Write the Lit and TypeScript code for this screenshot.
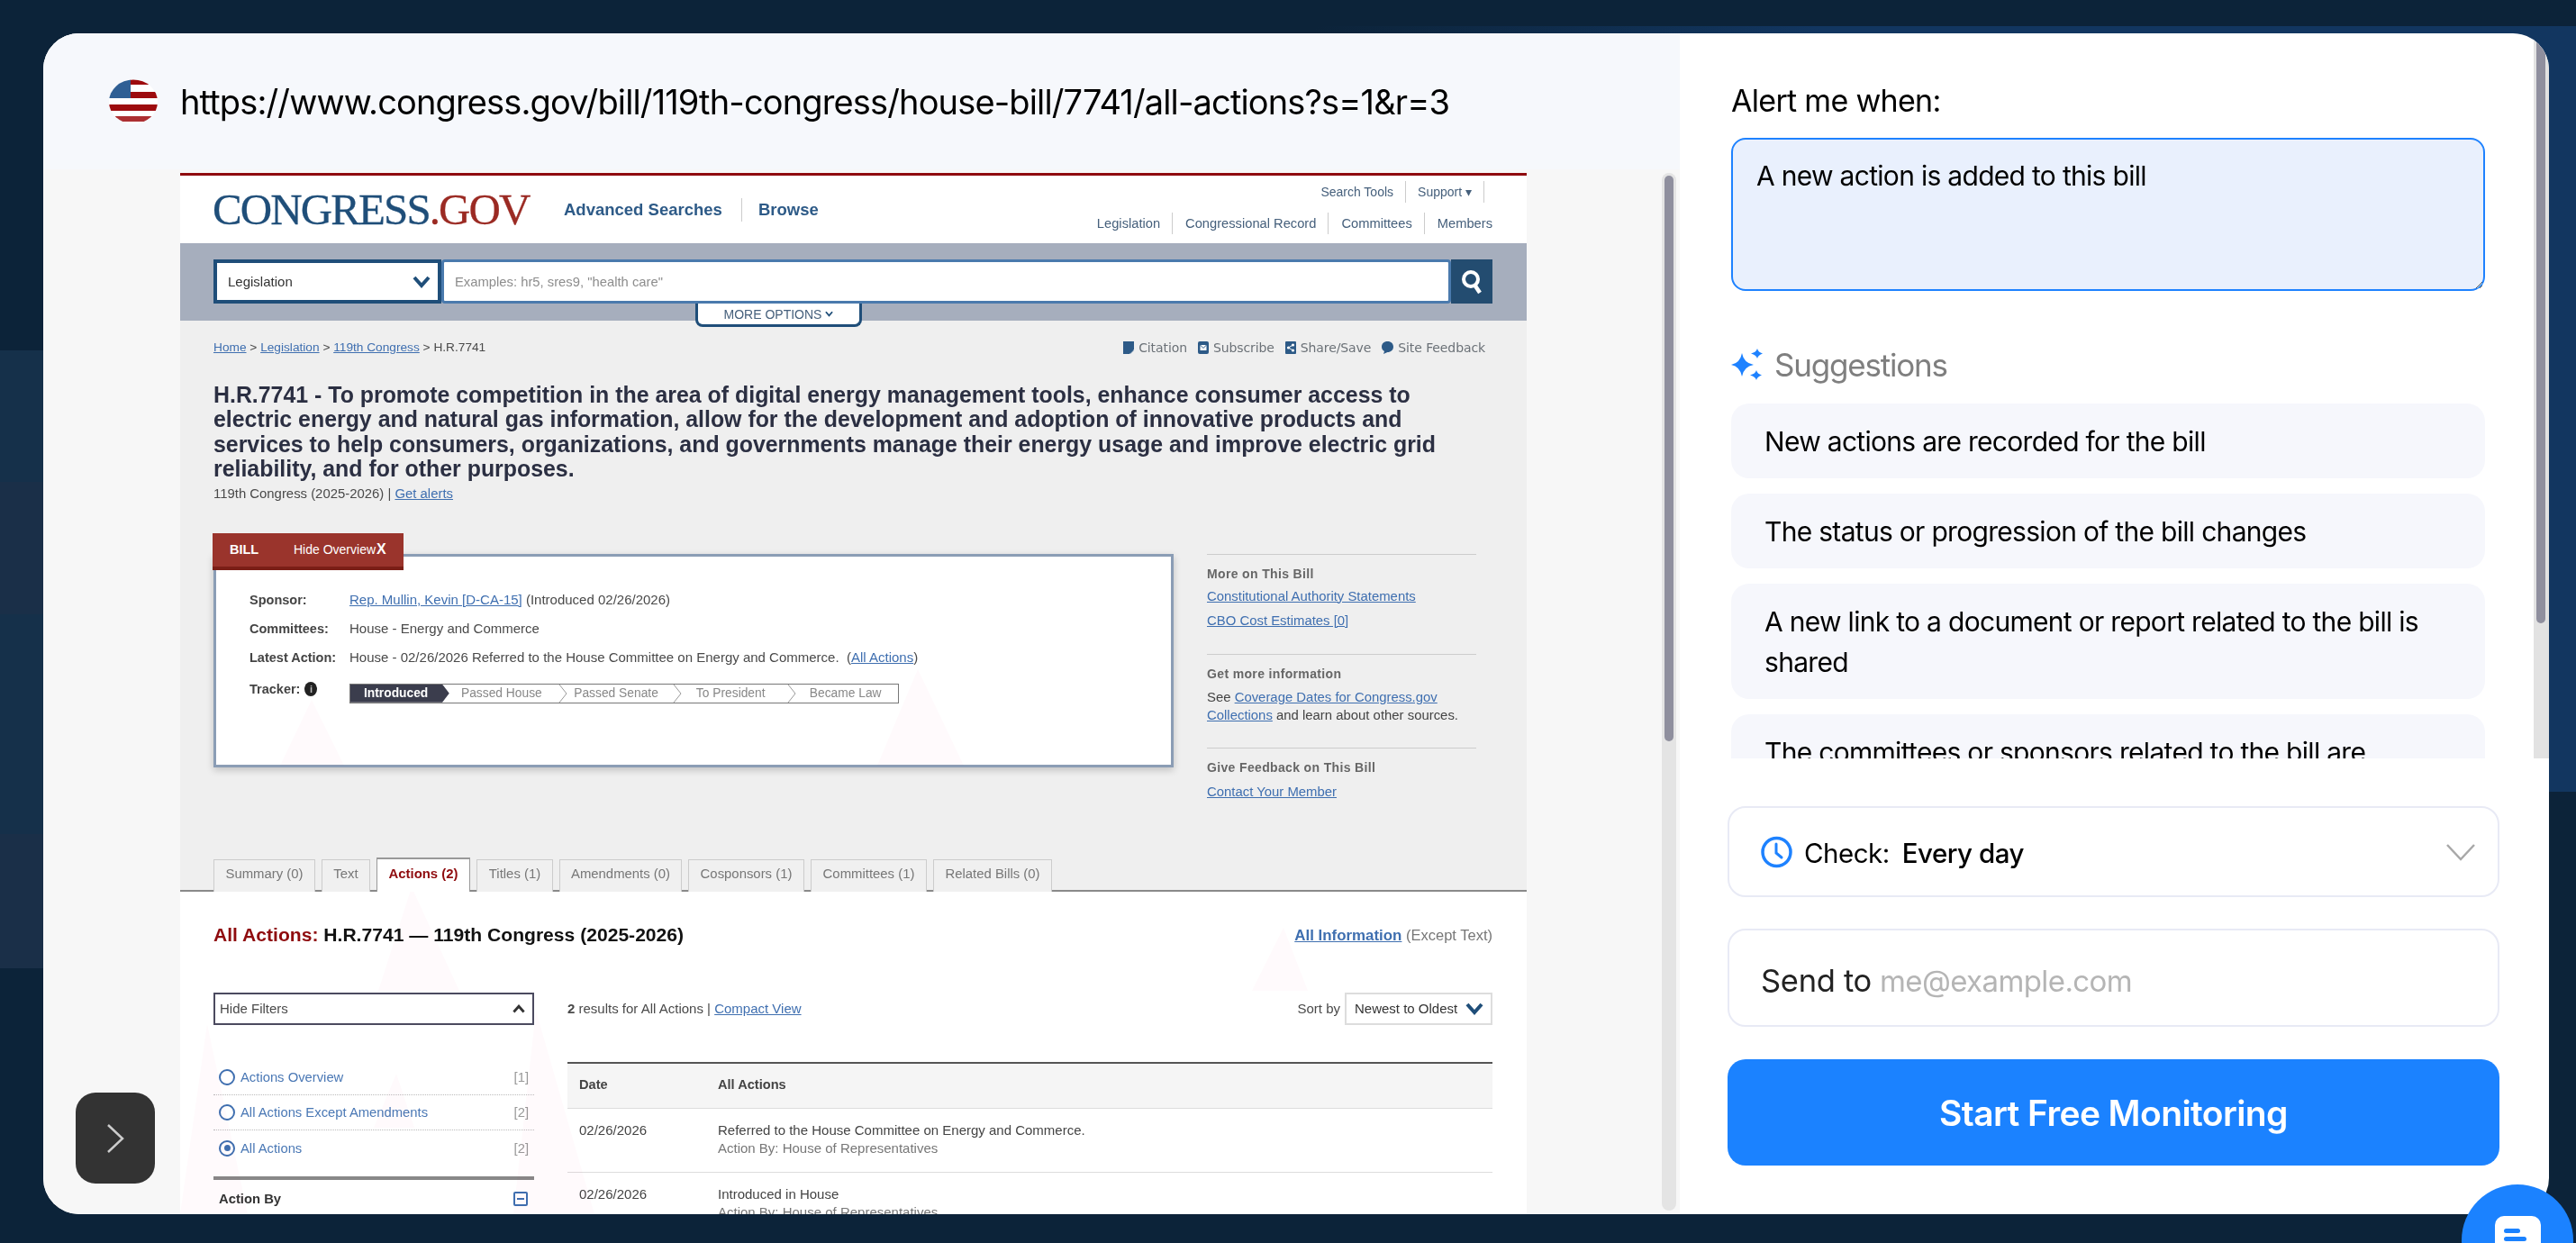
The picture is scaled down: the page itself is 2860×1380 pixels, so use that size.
import { LitElement, html, css, svg } from "lit";
import { customElement } from "lit/decorators.js";

const chevron = (w: number, h: number, c = "#1f4e79", sw = 4) => html`<svg width=${w} height=${h} viewBox="0 0 20 14"><path d="M2 2 L10 11 L18 2" fill="none" stroke=${c} stroke-width=${sw} /></svg>`;

@customElement("congress-shot")
class CongressShot extends LitElement {
  static styles = css`
    :host { display: block; width: 1495px; height: 1156px; position: relative; font: 14.8px/20px "Liberation Sans", Arial, sans-serif; color: #4a4a4a; overflow: hidden; background: #fff; }
    a { color: #3f6fb0; text-decoration: underline; }
    .redline { height: 3px; background: #8f0b0e; }
    .head { height: 75px; display: flex; padding: 0 38px 0 36px; align-items: center; background: #fff; }
    .logo { font: 49px/40px "Liberation Serif", serif; color: #1f4e79; width: 351px; white-space: nowrap; letter-spacing: -1.9px; -webkit-text-stroke: .3px currentColor; }
    .logo b { font-weight: 400; color: #9b2a23; }
    .nav { display: flex; margin-left: 39px; font: bold 18.5px/26px "Liberation Sans", sans-serif; color: #2d5a87; }
    .nav span:first-child { width: 197px; border-right: 1px solid #ccc; margin-right: 18px; white-space: nowrap; }
    .util { margin-left: auto; align-self: flex-start; padding-top: 6px; display: flex; flex-direction: column; align-items: flex-end; gap: 11px; font-size: 14.7px; color: #46607c; }
    .u1, .u2 { display: flex; height: 24px; line-height: 24px; white-space: nowrap; }
    .u1 { margin-right: 9px; font-size: 14px; }
    .u1 span { padding: 0 13px; border-right: 1px solid #ccc; }
    .u2 span { padding: 0 13px 0 14px; border-right: 1px solid #ccc; }
    .u2 span:last-child { border: 0; padding-right: 0; }
    .band { height: 86px; background: #a6aebd; padding: 18px 38px 0 37px; box-sizing: border-box; }
    .sr { display: flex; height: 49px; }
    .sel { width: 253px; box-sizing: border-box; border: 4px solid #1f4e79; background: #fff; display: flex; align-items: center; justify-content: space-between; padding: 0 8px 0 12px; font-size: 15px; color: #333; }
    .inp { flex: 1; box-sizing: border-box; border: 3px solid #4a7aad; border-radius: 4px; background: #fff; color: #8d8d8d; font-size: 14.8px; display: flex; align-items: center; padding-left: 12px; }
    .go { width: 46px; background: #234c70; display: flex; align-items: center; justify-content: center; }
    .more { margin-left: 535px; width: 185px; height: 26px; box-sizing: border-box; background: #fff; border: 3px solid #1f4e79; border-top: 0; border-radius: 0 0 8px 8px; display: flex; align-items: center; justify-content: center; gap: 4px; font-size: 14px; color: #46607c; position: relative; }
    .gray { height: 634px; box-sizing: border-box; background: #efefef; padding: 0 38px 0 37px; border-bottom: 2px solid #8a8a8a; display: flex; flex-direction: column; }
    .crumb { display: flex; justify-content: space-between; margin-top: 20px; height: 20px; font-size: 13.7px; }
    .acts { display: flex; gap: 12px; padding-right: 8px; font: 14px/20px "DejaVu Sans", sans-serif; letter-spacing: -.1px; color: #6b7177; }
    .acts span { display: flex; align-items: center; gap: 5px; }
    h1 { margin: 29px 0 0; font: bold 24.9px/27.4px "Liberation Sans", sans-serif; color: #2b2f42; width: 1400px; }
    .sub { margin-top: 3px; font-size: 14.9px; }
    .over { display: flex; margin-top: 34px; }
    .ol { width: 1066px; }
    .btab { width: 212px; height: 41px; box-sizing: border-box; margin-left: -1px; margin-bottom: -18px; background: #9a342c; border-bottom: 4px solid #7a1e16; color: #fff; display: flex; align-items: center; padding-left: 19px; font-size: 14px; position: relative; z-index: 1; white-space: nowrap; }
    .btab b { width: 71px; font-size: 14.5px; }
    .btab strong { font-size: 16px; margin-left: 1px; }
    .box { height: 237px; box-sizing: border-box; background: #fff; border: 3px solid #8b9db5; box-shadow: 0 3px 8px rgba(0,0,0,.2); padding: 32px 0 0 37px; }
    .r { display: grid; grid-template-columns: 111px 1fr; height: 32px; line-height: 32px; white-space: nowrap; font-size: 15px; }
    .r b { color: #444; font-size: 14.5px; }
    .r4 { margin-top: 3px; }
    .info { display: inline-block; width: 14px; height: 16px; border-radius: 50%; background: #222; margin-left: 5px; color: #bbb; font: bold 11px/16px "Liberation Sans", sans-serif; text-align: center; vertical-align: 1px; }
    .tr { display: flex; width: 610px; height: 22px; margin-top: 10px; box-sizing: border-box; border: 1px solid #777; background: #fff; font-size: 13.8px; line-height: 20px; color: #888; }
    .tr span { display: block; padding-right: 11px; width: 127.5px; box-sizing: border-box; position: relative; white-space: nowrap; text-align: center; }
    .tr span:last-child { width: 117px; padding-right: 0; }
    .tr .on { width: 110px; background: #3b3d4d; color: #fff; font-weight: bold; padding: 0 0 0 15px; text-align: left; clip-path: polygon(0 0, 93% 0, 100% 50%, 93% 100%, 0 100%); }
    .tr svg { position: absolute; right: -4px; top: 0; }
    .side { margin-left: 37px; margin-top: 23px; width: 299px; font-size: 14.9px; color: #444; }
    .sec { border-top: 1px solid #ccc; padding-top: 11px; }
    .sec b { display: block; color: #666; font-size: 14px; letter-spacing: .35px; }
    .s1 { height: 111px; box-sizing: border-box; }
    .s2 { height: 104px; box-sizing: border-box; }
    .m5 { display: block; margin-top: 5px; }
    .m7 { display: block; margin-top: 7px; }
    .m6 { margin-top: 6px; }
    .tabs { margin-top: auto; margin-bottom: -2px; display: grid; grid-template-columns: 113px 54px 104px 85px 136px 129px 129px 132px; gap: 7px; position: relative; z-index: 1; }
    .tabs span { height: 36px; margin-top: 2px; box-sizing: border-box; border: 1px solid #ccc; border-bottom: 0; background: #f0f0f0; text-align: center; line-height: 30px; font-size: 14.9px; color: #777; white-space: nowrap; }
    .tabs .on { height: 38px; margin-top: 0; background: #fff; border: 1px solid #999; border-bottom: 0; border-top-width: 2px; color: #8f0b0e; font-weight: bold; line-height: 32px; }
    .white { height: 358px; overflow: hidden; padding: 33px 38px 0 37px; box-sizing: border-box; }
    .ttl { display: flex; justify-content: space-between; height: 30px; align-items: center; }
    .ttl h2 { margin: 0; font: bold 21.1px/30px "Liberation Sans", sans-serif; color: #111; }
    .ttl h2 em { font-style: normal; color: #8f0b0e; }
    .ttl div { font-size: 16.5px; color: #777; }
    .ttl div a { font-weight: bold; font-size: 16.9px; }
    .cols { display: flex; gap: 37px; margin-top: 49px; }
    .fil { width: 356px; flex: none; }
    .hide { height: 36px; box-sizing: border-box; border: 2px solid #4b4a5f; display: flex; align-items: center; justify-content: space-between; padding: 0 8px 0 5px; font-size: 15px; }
    .list { margin-top: 39px; }
    .li { height: 39px; display: flex; align-items: center; padding: 0 6px; border-bottom: 1px dotted #bbb; box-sizing: border-box; color: #4a78b5; }
    .li:last-child { border: 0; }
    .li i { width: 18px; height: 18px; box-sizing: border-box; border: 2px solid #3f6fb0; border-radius: 50%; margin-right: 6px; display: flex; align-items: center; justify-content: center; }
    .li i.on::after { content: ""; width: 7px; height: 7px; border-radius: 50%; background: #3f6fb0; }
    .li u { text-decoration: none; margin-left: auto; color: #999; }
    .thick { margin-top: 12px; height: 4px; background: #888; }
    .by { height: 42px; display: flex; align-items: center; justify-content: space-between; padding: 0 7px 0 6px; font-weight: bold; color: #333; }
    .min { width: 16px; height: 16px; box-sizing: border-box; border: 2px solid #3f6fb0; border-radius: 2px; display: flex; align-items: center; justify-content: center; }
    .min::after { content: ""; width: 8px; height: 2px; background: #3f6fb0; }
    .main { flex: 1; min-width: 0; font-size: 15px; }
    .mt { display: flex; align-items: center; height: 36px; }
    .sort { margin-left: auto; margin-right: 5px; }
    .ssel { width: 164px; height: 36px; box-sizing: border-box; border: 2px solid #ddd; background: #fff; display: flex; align-items: center; justify-content: space-between; padding: 0 8px 0 9px; color: #333; white-space: nowrap; }
    .tb { margin-top: 41px; border-top: 2px solid #555; }
    .th, .td { display: grid; grid-template-columns: 154px 1fr; padding-left: 13px; }
    .th { height: 50px; padding-bottom: 3px; background: #f5f5f5; border-bottom: 1px solid #ddd; box-sizing: border-box; align-items: center; font-weight: bold; color: #444; font-size: 14.6px; }
    .td { padding-top: 14px; height: 71px; box-sizing: border-box; border-bottom: 1px solid #ddd; color: #444; }
    .td small { display: block; font-size: 15px; color: #777; }
    .tri { position: absolute; left: 0; top: 0; pointer-events: none; mix-blend-mode: multiply; }
  `;
  render() {
    return html`
      <div class="redline"></div>
      <div class="head">
        <div class="logo">CONGRESS<b>.GOV</b></div>
        <div class="nav"><span>Advanced Searches</span><span>Browse</span></div>
        <div class="util">
          <div class="u1"><span>Search Tools</span><span>Support ▾</span></div>
          <div class="u2"><span>Legislation</span><span>Congressional Record</span><span>Committees</span><span>Members</span></div>
        </div>
      </div>
      <div class="band">
        <div class="sr">
          <div class="sel">Legislation ${chevron(20, 14)}</div>
          <div class="inp">Examples: hr5, sres9, "health care"</div>
          <div class="go"><svg width="24" height="28" viewBox="0 0 24 28"><circle cx="11" cy="11" r="8" fill="none" stroke="#fff" stroke-width="4"/><path d="M15 17 L21 26" stroke="#fff" stroke-width="4.5"/></svg></div>
        </div>
        <div class="more">MORE OPTIONS ${chevron(9, 7, "#1f4e79", 4)}</div>
      </div>
      <div class="gray">
        <div class="crumb">
          <div><a>Home</a> &gt; <a>Legislation</a> &gt; <a>119th Congress</a> &gt; H.R.7741</div>
          <div class="acts">
            <span><svg width="12" height="14" viewBox="0 0 12 14"><path d="M0 0 H12 V9 L7 14 H0Z" fill="#2d5a87"/><path d="M8 14 V10 H12Z" fill="#2d5a87" opacity=".6"/></svg>Citation</span>
            <span><svg width="12" height="14" viewBox="0 0 12 14"><rect width="12" height="14" rx="2" fill="#2d5a87"/><path d="M2.5 4 H9.5 V10 H2.5Z" fill="#fff"/><path d="M2.5 4 L6 7.5 L9.5 4" fill="none" stroke="#2d5a87"/></svg>Subscribe</span>
            <span><svg width="12" height="14" viewBox="0 0 12 14"><rect width="12" height="14" rx="1" fill="#2d5a87"/><circle cx="3.5" cy="7" r="1.6" fill="#fff"/><circle cx="8.5" cy="4" r="1.6" fill="#fff"/><circle cx="8.5" cy="10" r="1.6" fill="#fff"/><path d="M8.5 4 L3.5 7 L8.5 10" fill="none" stroke="#fff"/></svg>Share/Save</span>
            <span><svg width="13" height="14" viewBox="0 0 13 14"><path d="M6.5 0 C10.5 0 13 2.6 13 6 C13 9.6 10.2 12 6.5 12 L2 14 L3 11 C1 10 0 8.2 0 6 C0 2.6 2.5 0 6.5 0Z" fill="#2d5a87"/></svg>Site Feedback</span>
          </div>
        </div>
        <h1>H.R.7741 - To promote competition in the area of digital energy management tools, enhance consumer access to electric energy and natural gas information, allow for the development and adoption of innovative products and services to help consumers, organizations, and governments manage their energy usage and improve electric grid reliability, and for other purposes.</h1>
        <div class="sub">119th Congress (2025-2026) | <a>Get alerts</a></div>
        <div class="over">
          <div class="ol">
            <div class="btab"><b>BILL</b>Hide Overview<strong>X</strong></div>
            <div class="box">
              <div class="r"><b>Sponsor:</b><div><a>Rep. Mullin, Kevin [D-CA-15]</a> (Introduced 02/26/2026)</div></div>
              <div class="r"><b>Committees:</b><div>House - Energy and Commerce</div></div>
              <div class="r"><b>Latest Action:</b><div>House - 02/26/2026 Referred to the House Committee on Energy and Commerce.&nbsp; (<a>All Actions</a>)</div></div>
              <div class="r r4"><b>Tracker:<i class="info">i</i></b>
                <div class="tr"><span class="on">Introduced</span>
                  ${["Passed House", "Passed Senate", "To President", "Became Law"].map((t, i) => html`<span>${t}${i < 3 ? html`<svg width="10" height="20" viewBox="0 0 10 20"><path d="M1 0 L9 10 L1 20" fill="none" stroke="#999"/></svg>` : ""}</span>`)}
                </div>
              </div>
            </div>
          </div>
          <div class="side">
            <div class="sec s1"><b>More on This Bill</b><a class="m5">Constitutional Authority Statements</a><a class="m7">CBO Cost Estimates [0]</a></div>
            <div class="sec s2"><b>Get more information</b><div class="m6">See <a>Coverage Dates for Congress.gov Collections</a> and learn about other sources.</div></div>
            <div class="sec"><b>Give Feedback on This Bill</b><a class="m7">Contact Your Member</a></div>
          </div>
        </div>
        <div class="tabs">
          <span>Summary (0)</span><span>Text</span><span class="on">Actions (2)</span><span>Titles (1)</span><span>Amendments (0)</span><span>Cosponsors (1)</span><span>Committees (1)</span><span>Related Bills (0)</span>
        </div>
      </div>
      <div class="white">
        <div class="ttl">
          <h2><em>All Actions:</em> H.R.7741 — 119th Congress (2025-2026)</h2>
          <div><a>All Information</a> (Except Text)</div>
        </div>
        <div class="cols">
          <div class="fil">
            <div class="hide">Hide Filters <svg width="14" height="10" viewBox="0 0 20 14"><path d="M2 12 L10 3 L18 12" fill="none" stroke="#333" stroke-width="4"/></svg></div>
            <div class="list">
              <div class="li"><i></i>Actions Overview<u>[1]</u></div>
              <div class="li"><i></i>All Actions Except Amendments<u>[2]</u></div>
              <div class="li"><i class="on"></i>All Actions<u>[2]</u></div>
            </div>
            <div class="thick"></div>
            <div class="by">Action By<span class="min"></span></div>
          </div>
          <div class="main">
            <div class="mt">
              <div><b>2</b> results for All Actions | <a>Compact View</a></div>
              <div class="sort">Sort by</div>
              <div class="ssel">Newest to Oldest ${chevron(20, 14)}</div>
            </div>
            <div class="tb">
              <div class="th"><span>Date</span><span>All Actions</span></div>
              <div class="td"><span>02/26/2026</span><div>Referred to the House Committee on Energy and Commerce.<small>Action By: House of Representatives</small></div></div>
              <div class="td"><span>02/26/2026</span><div>Introduced in House<small>Action By: House of Representatives</small></div></div>
            </div>
          </div>
        </div>
      </div>
      <svg class="tri" width="1495" height="1156" viewBox="0 0 1495 1156" fill="#fffafc">
        ${svg`<path d="M146 585 L182 658 L111 658Z"/><path d="M819 551 L870 658 L774 658Z"/><path d="M257 793 L310 908 L220 908Z"/><path d="M30 945 L75 1156 L0 1156Z"/><path d="M395 930 L460 1156 L370 1156Z"/><path d="M1225 838 L1252 908 L1190 908Z"/><path d="M240 1000 L260 1060 L215 1060Z"/>`}
      </svg>
    `;
  }
}

@customElement("app-root")
class AppRoot extends LitElement {
  static styles = css`
    :host { display: block; width: 2860px; height: 1380px; overflow: hidden; position: relative; font-family: Inter, "Liberation Sans", sans-serif; color: #000;
      background:
        linear-gradient(#1a2f48,#1a2f48) 0 926px/48px 149px no-repeat,
        linear-gradient(#15304a,#15304a) 0 682px/48px 244px no-repeat,
        linear-gradient(#1a2f48,#1a2f48) 0 535px/48px 147px no-repeat,
        linear-gradient(#15304a,#15304a) 0 389px/48px 146px no-repeat,
        linear-gradient(90deg, transparent, #123660 40%) right 29px/1400px 850px no-repeat,
        #0c2339; }
    .wrap { padding: 37px 30px 0 48px; }
    .card { display: flex; width: 2782px; height: 1311px; border-radius: 40px; overflow: hidden; background: #fff; }
    .left { width: 1817px; flex: none; display: flex; flex-direction: column; background: #f7f7f7; }
    .url { height: 151px; background: #f6f8fc; display: flex; align-items: center; padding-left: 73px; gap: 25px; font-size: 38px; letter-spacing: -.86px; margin-bottom: 4px; flex: none; }
    .url span { white-space: nowrap; }
    .url svg { flex: none; }
    .body { display: flex; padding-left: 152px; flex: 1; min-height: 0; }
    .sb { margin-left: 150px; width: 16px; height: 1152px; background: #e4e4e4; border-radius: 8px; padding: 3px; box-sizing: border-box; }
    .sb div { height: 628px; background: #8f8f9e; border-radius: 5px; }
    .right { flex: 1; display: flex; flex-direction: column; min-width: 0; }
    .top { height: 805px; display: flex; flex: none; }
    .sc { flex: 1; padding-left: 57px; overflow: hidden; padding-right: 54px; }
    .osb { width: 17px; background: #e2e2e2; padding: 0 4px 0 3px; box-sizing: border-box; flex: none; }
    .osb div { height: 655px; background: #8f8f9e; border-radius: 0 0 5px 5px; }
    .lbl { margin-top: 54px; font-size: 34px; line-height: 42px; height: 42px; letter-spacing: -.7px; }
    textarea { display: block; margin: 20px 0 0; width: 837px; height: 170px; box-sizing: border-box; border: 2px solid #1e82ff; border-radius: 16px; background: #e9f0fd; font: 30px/40px Inter, sans-serif; letter-spacing: -.7px; padding: 20px 26px 10px; resize: vertical; color: #000; outline: none; }
    .sg { display: flex; align-items: center; gap: 13px; margin-top: 60px; height: 44px; font-size: 35px; color: #7f7f7f; letter-spacing: -1.2px; }
    .pills { margin-top: 21px; display: flex; flex-direction: column; gap: 17px; }
    .pill { background: #f6f7fc; border-radius: 20px; padding: 20px 37px 18px; font-size: 30px; line-height: 45px; letter-spacing: -.7px; }
    .form { padding: 53px 55px 0 53px; display: flex; flex-direction: column; }
    .f { box-sizing: border-box; border: 2px solid #e8eaf5; border-radius: 20px; display: flex; align-items: center; padding: 0 24px 0 35px; }
    .f1 { height: 101px; font-size: 29.5px; letter-spacing: -.5px; padding-top: 2px; }
    .f2 { height: 109px; margin-top: 35px; padding-top: 6px; }
    .f1 b { font-weight: 500; margin-left: 14px; }
    .f1 svg:first-child { margin-right: 13px; margin-top: -2px; }
    .f1 svg:last-child { margin-left: auto; margin-top: -2px; }
    .f2 span { white-space: nowrap; color: #222; margin-right: 9px; font-size: 34.5px; letter-spacing: -.3px; }
    .f2 input { flex: 1; border: 0; outline: 0; padding: 0; background: transparent; font: 33px Inter, sans-serif; letter-spacing: -.6px; }
    .f2 input::placeholder { color: #b5b5b5; }
    .cta { margin-top: 36px; height: 118px; background: #1b82ff; border-radius: 20px; border: 0; color: #fff; font: 600 39px Inter, sans-serif; letter-spacing: -.6px; display: flex; align-items: center; justify-content: center; }
    .expand { position: absolute; left: 84px; top: 1213px; width: 88px; height: 101px; border-radius: 22px; background: #333; display: flex; align-items: center; justify-content: center; }
    .chat { position: absolute; left: 2733px; top: 1315px; width: 124px; height: 124px; border-radius: 50%; background: #1b82ff; display: flex; justify-content: center; padding-top: 35px; box-sizing: border-box; }
    .bub { width: 51px; height: 50px; background: #fff; border-radius: 10px; padding: 14px 0 0 10px; box-sizing: border-box; }
    .bub i { display: block; height: 5px; border-radius: 3px; background: #1b82ff; width: 18px; margin-bottom: 4px; }
    .bub i + i { width: 25px; }
  `;
  render() {
    const pills = ["New actions are recorded for the bill", "The status or progression of the bill changes", "A new link to a document or report related to the bill is shared", "The committees or sponsors related to the bill are updated"];
    return html`
      <div class="wrap">
        <div class="card">
          <div class="left">
            <div class="url">
              <svg width="54" height="50" viewBox="0 0 54 50">
                <defs><clipPath id="fc"><ellipse cx="27" cy="25" rx="27" ry="24.5"/></clipPath></defs>
                <g clip-path="url(#fc)">
                  <rect width="54" height="50" fill="#fff"/>
                  <rect x="23" y="0" width="31" height="6" fill="#9d0b0e"/>
                  <rect y="14" x="23" width="31" height="7" fill="#9d0b0e"/>
                  <rect y="28" width="54" height="7" fill="#9d0b0e"/>
                  <rect y="41" width="54" height="6" fill="#9d0b0e" opacity=".85"/>
                  <rect width="24" height="21" fill="#2f5f94"/>
                </g>
              </svg>
              <span>https://www.congress.gov/bill/119th-congress/house-bill/7741/all-actions?s=1&r=3</span>
            </div>
            <div class="body">
              <congress-shot></congress-shot>
              <div class="sb"><div></div></div>
            </div>
          </div>
          <div class="right">
            <div class="top">
              <div class="sc">
                <div class="lbl">Alert me when:</div>
                <textarea>A new action is added to this bill</textarea>
                <div class="sg">
                  <svg width="35" height="36" viewBox="0 0 35 36" fill="#1e82ff"><path d="M12 5 Q14 16 25 18 Q14 20 12 31 Q10 20 0 18 Q10 16 12 5Z"/><path d="M29 0 Q30 4 35 5.5 Q30 7 29 11 Q28 7 22 5.5 Q28 4 29 0Z"/><path d="M28 24 Q29 28 34 29.5 Q29 31 28 35 Q27 31 21 29.5 Q27 28 28 24Z"/></svg>
                  Suggestions
                </div>
                <div class="pills">${pills.map((p) => html`<div class="pill">${p}</div>`)}</div>
              </div>
              <div class="osb"><div></div></div>
            </div>
            <div class="form">
              <div class="f f1">
                <svg width="35" height="36" viewBox="0 0 35 36" fill="none" stroke="#1e82ff" stroke-width="3.5"><circle cx="17.5" cy="18" r="15.5"/><path d="M17 9 V19 L23 24" stroke-width="3" stroke-linecap="round"/></svg>
                Check: <b>Every day</b>
                <svg width="34" height="20" viewBox="0 0 34 20" fill="none" stroke="#a8a8a8" stroke-width="2.5"><path d="M2 2 L17 18 L32 2"/></svg>
              </div>
              <div class="f f2"><span>Send to</span><input placeholder="me@example.com" /></div>
              <button class="cta">Start Free Monitoring</button>
            </div>
          </div>
        </div>
      </div>
      <div class="expand"><svg width="20" height="34" viewBox="0 0 20 34" fill="none" stroke="#ccc" stroke-width="2.5"><path d="M2 2 L18 17 L2 32"/></svg></div>
      <div class="chat"><div class="bub"><i></i><i></i></div></div>
    `;
  }
}
